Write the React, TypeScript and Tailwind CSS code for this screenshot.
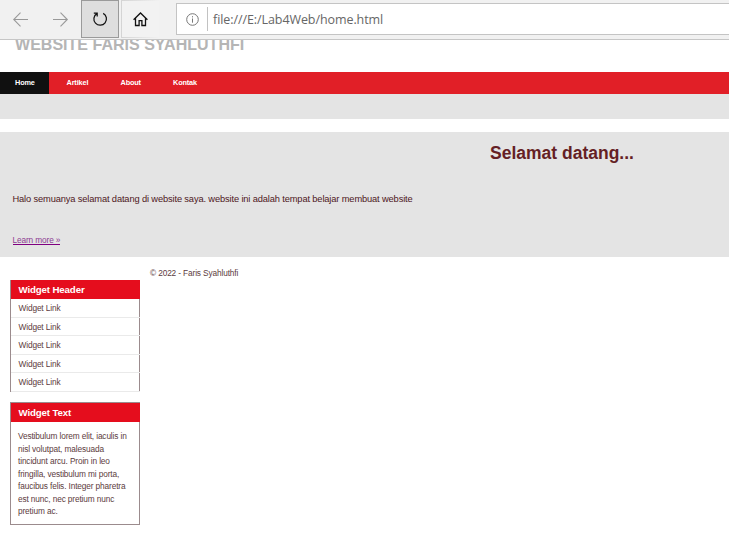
const navItems = [
  { label: "Artikel", cls: "ml-[17.5px] w-[54px]" },
  { label: "About", cls: "w-[52.5px]" },
  { label: "Kontak", cls: "w-[60px]" },
];

const links = ["h-[19px]", "h-[18px]", "h-[19px]", "h-[18px]", "h-[19px]"];

const textLines = [
  "Vestibulum lorem elit, iaculis in",
  "nisl volutpat, malesuada",
  "tincidunt arcu. Proin in leo",
  "fringilla, vestibulum mi porta,",
  "faucibus felis. Integer pharetra",
  "est nunc, nec pretium nunc",
  "pretium ac.",
];

function Toolbar() {
  return (
    <header className="relative z-10 flex h-10 shrink-0 items-start border-b border-[#c6c6c6] bg-[#f1f1f1]">
      <div className="flex h-[39px] w-[81px] items-center pl-[13px]">
        <svg width="56" height="16" viewBox="0 0 56 16" fill="none" stroke="#999999" strokeWidth="1.1">
          <path d="M15 7.5H.7M7.5 .7L.7 7.5l6.8 6.8M40 7.5h14.3M47.5 .7l6.8 6.8-6.8 6.8" />
        </svg>
      </div>
      <div className="flex h-[38px] w-[38px] items-center justify-center border border-[#9a9a9a] bg-[#dedede]">
        <svg width="16" height="16" viewBox="0 0 16 16" fill="none" stroke="#111111" strokeWidth="1.25">
          <path d="M11.2 2.4A6.3 6.3 0 1 1 4.8 2.6M1.8 2.1h3.4v3.3" />
        </svg>
      </div>
      <div className="ml-[2px] flex h-[38px] w-[38px] items-center justify-center bg-linear-to-r from-[#d4d4d4] to-[#f1f1f1] py-px pl-px">
        <div className="flex h-full w-full items-center justify-center bg-[#f2f2f2]">
          <svg width="16" height="16" viewBox="0 0 16 16" fill="none" stroke="#111111" strokeWidth="1.3">
            <path d="M.6 8.8L7.5 2l6.9 6.8M2.5 7.2v7.3h3.6V9.6h2.8v4.9h3.6V7.2" />
          </svg>
        </div>
      </div>
      <div className="mt-[3px] ml-[17px] flex h-8 flex-1 items-center border border-r-0 border-[#c4c4c4] bg-white pl-[9px]">
        <svg width="13" height="13" viewBox="0 0 13 13" fill="none" stroke="#777777" strokeWidth="1">
          <circle cx="6.5" cy="6.5" r="5.8" />
          <path d="M6.5 5.5v4.2M6.5 3.2v1.2" />
        </svg>
        <span className="ml-[8px] h-6 w-px bg-[#c2c2c2]" />
        <span className="mt-px ml-[5px] font-['Open_Sans','Noto_Sans',sans-serif] text-[12.5px] leading-4 tracking-[-0.08px] whitespace-nowrap text-[#666666]">
          file:///E:/Lab4Web/home.html
        </span>
      </div>
    </header>
  );
}

export default function App() {
  return (
    <div className="flex h-[536px] w-[729px] flex-col overflow-hidden bg-white font-['Liberation_Sans',Arial,sans-serif] text-[8.3px] tracking-[-0.13px] text-[#5c3b40]">
      <Toolbar />
      <div className="h-8 shrink-0">
        <h1 className="-mt-[5px] ml-[15px] w-fit origin-left scale-x-[0.943] text-[17px] leading-5 font-bold tracking-normal whitespace-nowrap text-[#b5b5b5]">
          WEBSITE FARIS SYAHLUTHFI
        </h1>
      </div>
      <nav className="flex h-[22px] shrink-0 bg-[#e11f27] text-[7.3px] leading-[21px] font-bold text-white">
        <a className="w-[49px] bg-[#101010] pl-[15px]">Home</a>
        {navItems.map((item) => (
          <a key={item.label} className={item.cls}>{item.label}</a>
        ))}
      </nav>
      <div className="h-[25px] shrink-0 bg-[#e4e4e4]" />
      <section className="mt-[13px] h-[125px] shrink-0 bg-[#e4e4e4] pl-[12.5px]">
        <h2 className="ml-[477.5px] w-fit pt-[10px] text-[17.5px] leading-[22px] font-bold tracking-normal whitespace-nowrap text-[#651f25]">Selamat datang...</h2>
        <p className="mt-[29px] w-fit text-[9.3px] leading-3 tracking-[-0.135px] whitespace-nowrap text-[#4e171c]">
          Halo semuanya selamat datang di website saya. website ini adalah tempat belajar membuat website
        </p>
        <a className="mt-[30px] block h-[10px] w-fit border-b border-[#800080] leading-[11px] text-[#8c3b91]">Learn more »</a>
      </section>
      <div className="flex">
        <aside className="ml-[10px] w-[130px] pt-[23px]">
          <section>
            <h3 className="h-[19px] border-l border-[#9b8b8d] bg-[#e50d1d] pl-[7.5px] text-[9.7px] leading-[20px] font-bold text-white">Widget Header</h3>
            <ul>
              {links.map((height, i) => (
                <li key={i} className={`${height} flex flex-col border-l border-[#9b8b8d]`}>
                  <a className="min-h-0 flex-1 border-r border-[#9b8b8d] pl-[7.5px] leading-[19px]">Widget Link</a>
                  <span className="h-px shrink-0 bg-[#eaeaea]" />
                </li>
              ))}
            </ul>
          </section>
          <section className="mt-[10px] h-[123px] border border-[#9b8b8d]">
            <h3 className="-mr-px h-[19px] bg-[#e50d1d] pl-[7.5px] text-[9.7px] leading-[20px] font-bold text-white">Widget Text</h3>
            <p className="pt-[8px] pl-[7px] leading-[12.5px] whitespace-nowrap">
              {textLines.map((line) => (
                <span key={line} className="block">{line}</span>
              ))}
            </p>
          </section>
        </aside>
        <footer className="mt-[11px] ml-[10px] h-fit leading-[11px]">© 2022 - Faris Syahluthfi</footer>
      </div>
    </div>
  );
}
